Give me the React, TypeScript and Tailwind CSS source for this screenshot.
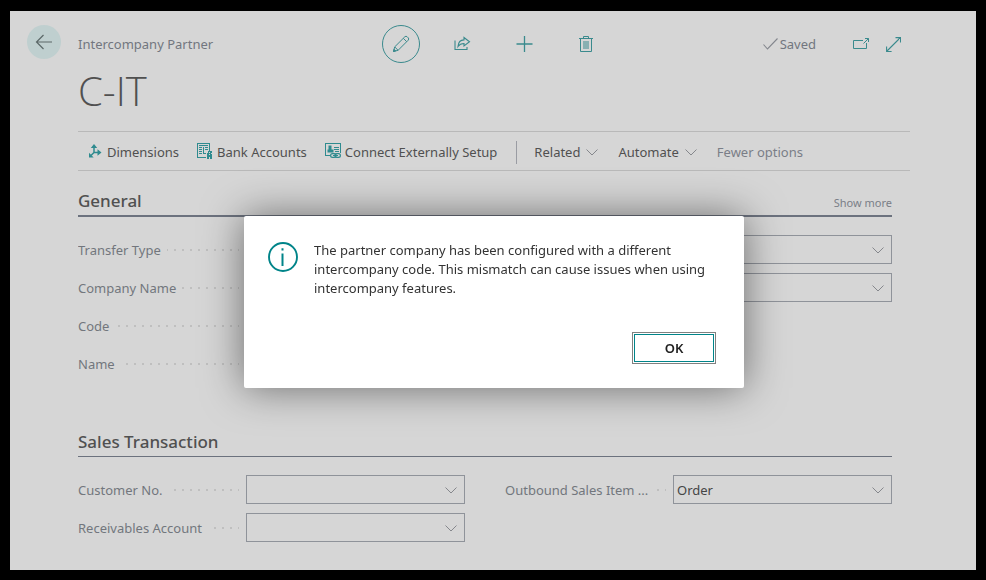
import type { ReactNode } from "react";

const BackIcon = () => (
  <svg width="18" height="16" viewBox="0 0 18 16" fill="none" stroke="#5c6868" strokeWidth="1.2">
    <path d="M17 8H1.500M8.500 1L1.500 8l7 7" />
  </svg>
);

const PencilIcon = () => (
  <svg width="18" height="18" viewBox="0 0 18 18" fill="none" stroke="#3a8a8d">
    <path d="M1.500 16.500l1.200-4.600L12.800 1.800a1.700 1.700 0 0 1 2.400 0l1 1a1.700 1.700 0 0 1 0 2.400L6.100 15.300zM2.700 11.900l3.400 3.400M11.300 3.300l3.400 3.400" />
    <path d="M1.500 16.500l.6-2.200 1.600 1.600z" fill="#3a8a8d" />
  </svg>
);

const ShareIcon = () => (
  <svg width="18" height="16" viewBox="0 0 18 16" fill="none" stroke="#3a8a8d" strokeWidth="1.1">
    <path d="M1 4.500v9h12v-2.500" />
    <path d="M10 1.500l5.500 4.300-5.500 4.200V7.500C7.300 7.500 5.500 8.300 4 10.500 4.300 6.500 6.500 4 10 3.900z" />
  </svg>
);

const PlusIcon = () => (
  <svg width="18" height="18" viewBox="0 0 18 18" fill="none" stroke="#3a8a8d" strokeWidth="1.3">
    <path d="M8.500 1v16M.500 9h16" />
  </svg>
);

const TrashIcon = () => (
  <svg width="16" height="18" viewBox="0 0 16 18" fill="none" stroke="#3a8a8d">
    <path d="M0 3.500h14M4.500 3.500v-2h5v2M1.500 3.500v13h11v-13" />
    <path d="M4 6h6v8H4z" fill="#3a8a8d" fillOpacity=".5" stroke="none" />
  </svg>
);

const CheckIcon = () => (
  <svg width="15" height="12" viewBox="0 0 15 12" fill="none" stroke="#83868d" strokeWidth="1.1">
    <path d="M.500 6.500l4 4.500 10-10.500" />
  </svg>
);

const PopOutIcon = () => (
  <svg width="16" height="14" viewBox="0 0 16 14" fill="none" stroke="#3a8a8d">
    <path d="M10 3.500H.500v8h13V6" />
    <path d="M10.500 6.500l5-5M12 1.500h3.500V5" />
  </svg>
);

const ExpandIcon = () => (
  <svg width="15" height="15" viewBox="0 0 15 15" fill="none" stroke="#3a8a8d" strokeWidth="1.1">
    <path d="M1 14L14 1M9.500.600h5v5M.600 9.500v5h5" />
  </svg>
);

const DimensionsIcon = () => (
  <svg width="14" height="14" viewBox="0 0 14 14" fill="none" stroke="#2f8b8f" strokeWidth="1.500">
    <path d="M6 2v6.500h5M6 8.500L3 11.500" />
    <path d="M6 0l3.200 4H2.800zM13.500 8.500l-4 3.200V5.300zM1 8.800v4.700h4.700z" fill="#2f8b8f" stroke="none" />
  </svg>
);

const BankIcon = () => (
  <svg width="16" height="16" viewBox="0 0 16 16" fill="none" stroke="#2f8b8f" shapeRendering="crispEdges">
    <path d="M9 14.500H.500v-14h12V8" />
    <path d="M2 2.500h9M2 4.500h3M8 4.500h3M2 6.500h3M8 6.500h3M2 8.500h3M2 10.500h3M6.500 4v7M7 10.500h2" />
    <path d="M11 8h4v8h-2v-2h-1v2h-2v-6h1z" fill="#2f8b8f" stroke="none" />
    <path d="M12 9h1v1h-1zM12 11h1v1h-1zM14 10h1v1h-1z" fill="#d6d6d6" stroke="none" />
  </svg>
);

const ConnectIcon = () => (
  <svg width="16" height="16" viewBox="0 0 16 16" fill="none" stroke="#2f8b8f">
    <path d="M4.500 12.500h-4v-12h15v9" shapeRendering="crispEdges" />
    <path d="M3.500 2.500h3v4h2v3h-6v-3h1z" fill="#2f8b8f" stroke="none" />
    <path d="M9 4.500h5M9 6.500h5M10 8.500h4" shapeRendering="crispEdges" />
    <rect x="5.600" y="10.600" width="5.500" height="3.800" rx="1.900" strokeWidth="1.200" />
    <rect x="9.900" y="10.600" width="5.500" height="3.800" rx="1.900" strokeWidth="1.200" />
    <path d="M8 12.500h5" />
  </svg>
);

const InfoIcon = () => (
  <svg width="30" height="30" viewBox="0 0 30 30" fill="none" stroke="#008489" className="mt-px shrink-0">
    <circle cx="15" cy="15" r="14" strokeWidth="1.900" />
    <path d="M14.500 11.500V24M14.500 6.200v2.200" strokeWidth="2" />
  </svg>
);

const Chevron = ({ className = "" }: { className?: string }) => (
  <svg width="12" height="7" viewBox="0 0 12 7" fill="none" stroke="#85878c" className={className}>
    <path d="M.500.500L6 6 11.500.500" />
  </svg>
);

const IconButton = ({ label, className = "", children }: { label: string; className?: string; children: ReactNode }) => (
  <button type="button" aria-label={label} className={`flex items-center justify-center ${className}`}>
    {children}
  </button>
);

const ActionButton = ({ icon, children }: { icon: ReactNode; children: ReactNode }) => (
  <button type="button" className="flex items-center gap-1 whitespace-nowrap">
    <span className="flex w-4 justify-center pb-0.5">{icon}</span>
    {children}
  </button>
);

const MenuButton = ({ children }: { children: ReactNode }) => (
  <button type="button" aria-haspopup="menu" className="flex items-center gap-1.5 whitespace-nowrap">
    {children}
    <Chevron />
  </button>
);

type FieldProps = { id: string; label: string; hideLabel?: boolean; kind?: "select" | "text"; value?: string };

const Field = ({ id, label, hideLabel, kind = "select", value = "" }: FieldProps) => (
  <div className="flex h-[29px] items-center">
    {hideLabel ? (
      <div className="w-[168px] shrink-0" />
    ) : (
      <div className="mr-[7px] w-[161px] shrink-0 bg-[repeating-linear-gradient(90deg,#bfbfbf_0_2px,transparent_2px_8px)] bg-[length:100%_2px] bg-center bg-no-repeat">
        <label htmlFor={id} className="inline-block max-w-[152px] truncate bg-[#d6d6d6] pr-1.5 align-top text-[#72767d]">
          {label}
        </label>
      </div>
    )}
    <div className="relative h-full min-w-0 flex-1">
      {kind === "select" ? (
        <>
          <select
            id={id}
            aria-label={hideLabel ? label : undefined}
            defaultValue={value}
            className="h-full w-full appearance-none border border-[#8f939a] bg-transparent px-[3px] text-[#454545]"
          >
            <option value={value}>{value}</option>
          </select>
          <Chevron className="pointer-events-none absolute top-3 right-2" />
        </>
      ) : (
        <input id={id} type="text" defaultValue={value} className="h-full w-full border border-[#8f939a] bg-transparent px-[3px]" />
      )}
    </div>
  </div>
);

const App = () => {
  return (
    <div className="flex min-h-screen bg-black p-2.5 pt-[11px] font-['Noto_Sans','Open_Sans',sans-serif] text-[13px] leading-5 text-[#505050]">
      <main className="flex flex-1 items-start gap-[17px] bg-[#d6d6d6] pt-3.5 pr-[66px] pb-7 pl-[17px]">
        <IconButton label="Back" className="size-[34px] shrink-0 rounded-full bg-[#bfcfcf]">
          <BackIcon />
        </IconButton>

        <div className="min-w-0 flex-1">
          <header className="grid h-[38px] grid-cols-[1fr_auto_1fr] items-center text-[#72767f]">
            <span>Intercompany Partner</span>
            <div className="flex gap-6">
              <IconButton label="Edit" className="size-[38px] rounded-full border border-[#3a8a8d]">
                <PencilIcon />
              </IconButton>
              <IconButton label="Share" className="size-[38px]">
                <ShareIcon />
              </IconButton>
              <IconButton label="New" className="size-[38px]">
                <PlusIcon />
              </IconButton>
              <IconButton label="Delete" className="size-[38px]">
                <TrashIcon />
              </IconButton>
            </div>
            <div className="flex items-center justify-end pr-[9px]">
              <span className="mr-[37px] flex items-center gap-0.5">
                <CheckIcon />
                Saved
              </span>
              <IconButton label="Open in new window" className="mr-[17px]">
                <PopOutIcon />
              </IconButton>
              <IconButton label="Expand">
                <ExpandIcon />
              </IconButton>
            </div>
          </header>

          <h1 className="mt-1.5 mb-[18px] font-['Open_Sans','Noto_Sans',sans-serif] text-[40px] leading-[44px] font-light">C-IT</h1>

          <nav className="flex h-10 items-center border-y border-[#b9b9b9] pt-0.5 pl-[9px]">
            <div className="flex gap-[18px]">
              <ActionButton icon={<DimensionsIcon />}>Dimensions</ActionButton>
              <ActionButton icon={<BankIcon />}>Bank Accounts</ActionButton>
              <ActionButton icon={<ConnectIcon />}>Connect Externally Setup</ActionButton>
            </div>
            <div className="mr-[17px] ml-[19px] h-[23px] w-px bg-[#9a9ca3]" />
            <div className="flex gap-5">
              <MenuButton>Related</MenuButton>
              <MenuButton>Automate</MenuButton>
              <button type="button" className="whitespace-nowrap text-[#7a7e87]">
                Fewer options
              </button>
            </div>
          </nav>

          <div className="mr-[18px]">
            <section className="mt-4">
              <div className="flex h-[30px] items-center justify-between border-b-2 border-[#6c727e]">
                <h2 className="text-[17px] font-medium">General</h2>
                <button type="button" className="pt-1 text-[11px] text-[#7a7e87]">
                  Show more
                </button>
              </div>
              <div className="mt-[18px] grid grid-cols-2 gap-x-10">
                <div className="space-y-[9px]">
                  <Field id="transfer-type" label="Transfer Type" />
                  <Field id="company-name" label="Company Name" />
                  <Field id="code" label="Code" kind="text" />
                  <Field id="name" label="Name" kind="text" />
                </div>
                <div className="space-y-[9px]">
                  <Field id="receivables-account-no" label="Receivables Account No." hideLabel />
                  <Field id="payables-account-no" label="Payables Account No." hideLabel />
                </div>
              </div>
            </section>

            <section className="mt-[49px]">
              <div className="flex h-[30px] items-center border-b border-[#6c727e]">
                <h2 className="text-[17px] font-medium">Sales Transaction</h2>
              </div>
              <div className="mt-[18px] grid grid-cols-2 gap-x-10">
                <div className="space-y-[9px]">
                  <Field id="customer-no" label="Customer No." />
                  <Field id="receivables-account" label="Receivables Account" />
                </div>
                <div>
                  <Field id="outbound-item" label="Outbound Sales Item ..." value="Order" />
                </div>
              </div>
            </section>
          </div>
        </div>
      </main>

      <div className="fixed inset-0 flex items-center justify-center pt-6 pl-0.5">
        <div
          role="alertdialog"
          aria-modal="true"
          aria-describedby="dialog-message"
          className="w-[500px] max-w-full rounded-xs bg-white pt-[25px] pr-7 pb-[26px] pl-6 shadow-[0_0_40px_rgba(0,0,0,0.5)]"
        >
          <div className="flex items-start gap-4">
            <InfoIcon />
            <p id="dialog-message" className="leading-[19px] text-[#333333]">
              The partner company has been configured with a different intercompany code. This mismatch can cause issues when using
              intercompany features.
            </p>
          </div>
          <div className="mt-9 flex justify-end pr-0.5">
            <button
              type="button"
              className="h-7 w-20 border border-[#008489] font-semibold text-[#212121] outline-1 outline-offset-1 outline-[#808080]"
            >
              OK
            </button>
          </div>
        </div>
      </div>
    </div>
  );
};

export default App;
